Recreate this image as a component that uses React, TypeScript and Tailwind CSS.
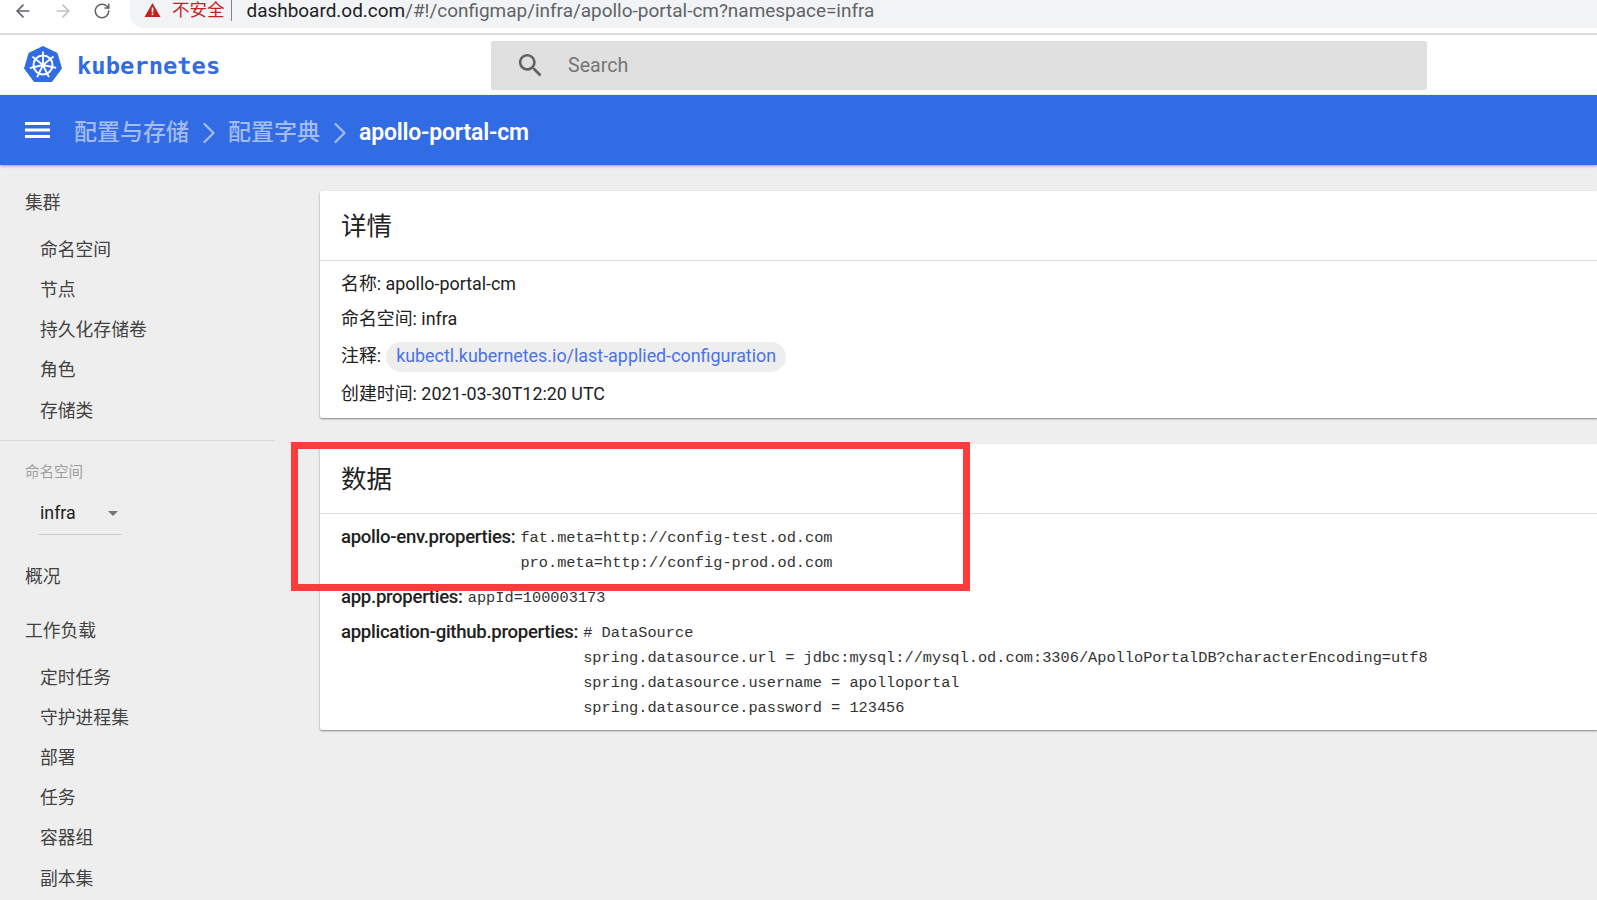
import React from 'react';
import { ArrowLeft, ArrowRight, ChevronRight, RotateCw } from 'lucide-react';

const FONT = "font-['Roboto','Noto_Sans_CJK_SC',sans-serif]";

const clusterItems = ['命名空间', '节点', '持久化存储卷', '角色', '存储类'];
const workloadItems = ['定时任务', '守护进程集', '部署', '任务', '容器组', '副本集'];

function KubeLogo() {
  const spokes = [0, 51.4, 102.8, 154.2, 205.7, 257.1, 308.5];
  return (
    <svg width="38" height="38" viewBox="0 0 38 38">
      <path d="M19 0.5 L33 7.2 L37.5 22.5 L27.8 35.5 L10.2 35.5 L0.5 22.5 L5 7.2 Z" fill="#326ce5" strokeLinejoin="round" stroke="#326ce5" strokeWidth="1" />
      <circle cx="19" cy="19" r="9.5" fill="none" stroke="#fff" strokeWidth="2" />
      <circle cx="19" cy="19" r="2.2" fill="#fff" />
      {spokes.map((a) => (
        <line key={a} x1="19" y1="19" x2="19" y2="5.5" stroke="#fff" strokeWidth="1.8" transform={`rotate(${a} 19 19)`} />
      ))}
    </svg>
  );
}

function Card({ title, children }: { title: string; children: React.ReactNode }) {
  return (
    <section className="bg-white rounded-l-[2px] shadow-[0_1px_2px_rgba(0,0,0,0.45)]">
      <h2 className="h-[70px] pl-[21px] pt-[2px] flex items-center text-[25.5px] text-[#212121] border-b border-[#e0e0e0]">{title}</h2>
      {children}
    </section>
  );
}

function DataRow({ label, lines }: { label: string; lines: string[] }) {
  return (
    <div className="flex items-start">
      <span className="text-[18.6px] leading-[25px] font-medium text-[#212121] tracking-[-0.3px]">{label}</span>
      <pre className="ml-[5px] font-['Liberation_Mono',monospace] text-[15.3px] leading-[25px] text-[#333] pt-[1px]">{lines.join('\n')}</pre>
    </div>
  );
}

export default function App() {
  return (
    <div className={`relative w-[1597px] h-[900px] overflow-hidden bg-[#eeeeee] flex flex-col ${FONT}`}>
      {/* browser chrome */}
      <div className="h-[35px] shrink-0 bg-white border-b-2 border-[#dadce0] flex items-start">
        <div className="w-[130px] shrink-0 flex items-center gap-[20px] pl-[13px] pt-[1px] h-[21px] text-[#5f6368]">
          <ArrowLeft size={20} />
          <ArrowRight size={20} className="text-[#bdc1c6]" />
          <RotateCw size={18} />
        </div>
        <div className="flex-1 h-[28px] bg-[#f1f3f4] rounded-bl-[14px] flex items-center pl-[14px] mb-[5px]">
          <svg width="17" height="16" viewBox="0 0 17 16" className="mt-[-8px]">
            <path d="M8.5 1 L16.5 15 L0.5 15 Z" fill="#c5221f" />
            <rect x="7.7" y="5.5" width="1.6" height="5" fill="#fff" />
            <rect x="7.7" y="11.5" width="1.6" height="1.6" fill="#fff" />
          </svg>
          <span className="ml-[11px] mt-[-8px] text-[17.5px] text-[#c5221f]">不安全</span>
          <span className="ml-[6px] mt-[-8px] w-px h-[22px] bg-[#80868b]" />
          <span className="ml-[15px] mt-[-5px] text-[18.95px] text-[#202124]">
            dashboard.od.com<span className="text-[#5f6368]">/#!/configmap/infra/apollo-portal-cm?namespace=infra</span>
          </span>
        </div>
      </div>

      {/* kubernetes header */}
      <header className="h-[60px] shrink-0 bg-white flex items-center">
        <div className="w-[491px] shrink-0 flex items-center pl-[24px]">
          <KubeLogo />
          <span className="ml-[15px] mt-[4px] font-['DejaVu_Sans_Mono',monospace] font-bold text-[23.8px] text-[#326ce5]">kubernetes</span>
        </div>
        <div className="w-[936px] h-[49px] bg-[#e0e0e0] rounded-[2px] flex items-center pl-[24px]">
          <svg width="31" height="31" viewBox="0 0 24 24" fill="#616161">
            <path d="M15.5 14h-.79l-.28-.27C15.41 12.59 16 11.11 16 9.5 16 5.91 13.09 3 9.5 3S3 5.91 3 9.5 5.91 16 9.5 16c1.61 0 3.09-.59 4.23-1.57l.27.28v.79l5 4.99L20.49 19l-4.99-5zm-6 0C7.01 14 5 11.99 5 9.5S7.01 5 9.5 5 14 7.01 14 9.5 11.99 14 9.5 14z" />
          </svg>
          <span className="ml-[22px] mt-[2px] text-[19.6px] text-[#757575]">Search</span>
        </div>
      </header>

      {/* breadcrumb bar */}
      <div className="h-[70px] shrink-0 bg-[#326ce5] shadow-[0_1px_3px_rgba(0,0,0,0.35)] z-10 flex items-center pl-[25px] text-[23px] font-medium">
        <svg width="26" height="16" viewBox="0 0 26 16" className="mr-[23px]">
          <rect x="0" y="0" width="25" height="3" fill="#fff" />
          <rect x="0" y="6.5" width="25" height="3" fill="#fff" />
          <rect x="0" y="13" width="25" height="3" fill="#fff" />
        </svg>
        <div className="flex items-center mt-[6px]">
          <span className="text-[#a3bcf2]">配置与存储</span>
          <ChevronRight size={36} strokeWidth={1.5} className="mx-[1.5px] text-[#a3bcf2]" />
          <span className="text-[#a3bcf2]">配置字典</span>
          <ChevronRight size={36} strokeWidth={1.5} className="mx-[1.5px] text-[#a3bcf2]" />
          <span className="text-white font-semibold tracking-[-0.2px]">apollo-portal-cm</span>
        </div>
      </div>

      <div className="flex-1 flex min-h-0">
        {/* sidebar */}
        <aside className="w-[275px] shrink-0 text-[17.8px] text-[#424242] pt-[18px]">
          <div className="h-[40px] pl-[25px] flex items-center">集群</div>
          <ul className="mt-[7px]">
            {clusterItems.map((item) => (
              <li key={item} className="h-[40.2px] pl-[40px] flex items-center">{item}</li>
            ))}
          </ul>
          <div className="mt-[9px] border-t border-[#d6d6d6]" />
          <div className="mt-[21px] pl-[25px] text-[14.5px] leading-[22px] text-[#9e9e9e]">命名空间</div>
          <div className="ml-[38px] mt-[13px] w-[84px] h-[38px] border-b border-[#cfcfcf] flex items-center justify-between pl-[2px] pr-[4px] pb-[4px] text-[#212121]">
            <span>infra</span>
            <span className="w-0 h-0 border-l-[5px] border-r-[5px] border-t-[5px] border-l-transparent border-r-transparent border-t-[#757575]" />
          </div>
          <div className="mt-[22px] h-[40px] pl-[25px] flex items-center">概况</div>
          <div className="mt-[14px] h-[40px] pl-[25px] flex items-center">工作负载</div>
          <ul className="mt-[7px]">
            {workloadItems.map((item) => (
              <li key={item} className="h-[40.2px] pl-[40px] flex items-center">{item}</li>
            ))}
          </ul>
        </aside>

        {/* content */}
        <main className="flex-1 pl-[45px] pt-[26px] flex flex-col gap-[26px]">
          <Card title="详情">
            <div className="h-[157px] pl-[21px] pt-[6px] text-[17.9px] text-[#212121]">
              <div className="h-[35px] flex items-center">名称: apollo-portal-cm</div>
              <div className="h-[35px] flex items-center">命名空间: infra</div>
              <div className="h-[39px] flex items-center">
                注释:
                <span className="ml-[5px] h-[30px] px-[10px] rounded-full bg-[#eeeeee] flex items-center text-[#4a72e8]">kubectl.kubernetes.io/last-applied-configuration</span>
              </div>
              <div className="h-[36px] flex items-center">创建时间: 2021-03-30T12:20 UTC</div>
            </div>
          </Card>
          <Card title="数据">
            <div className="h-[216px] pl-[21px] pt-[11px] flex flex-col gap-[9px]">
              <DataRow label="apollo-env.properties:" lines={['fat.meta=http://config-test.od.com', 'pro.meta=http://config-prod.od.com']} />
              <DataRow label="app.properties:" lines={['appId=100003173']} />
              <DataRow
                label="application-github.properties:"
                lines={[
                  '# DataSource',
                  'spring.datasource.url = jdbc:mysql://mysql.od.com:3306/ApolloPortalDB?characterEncoding=utf8',
                  'spring.datasource.username = apolloportal',
                  'spring.datasource.password = 123456',
                ]}
              />
            </div>
          </Card>
        </main>
      </div>

      {/* red annotation box drawn over the screenshot */}
      <div className="absolute left-[291px] top-[442px] w-[679px] h-[149px] border-[7px] border-[#ff3b3b]" />
    </div>
  );
}
